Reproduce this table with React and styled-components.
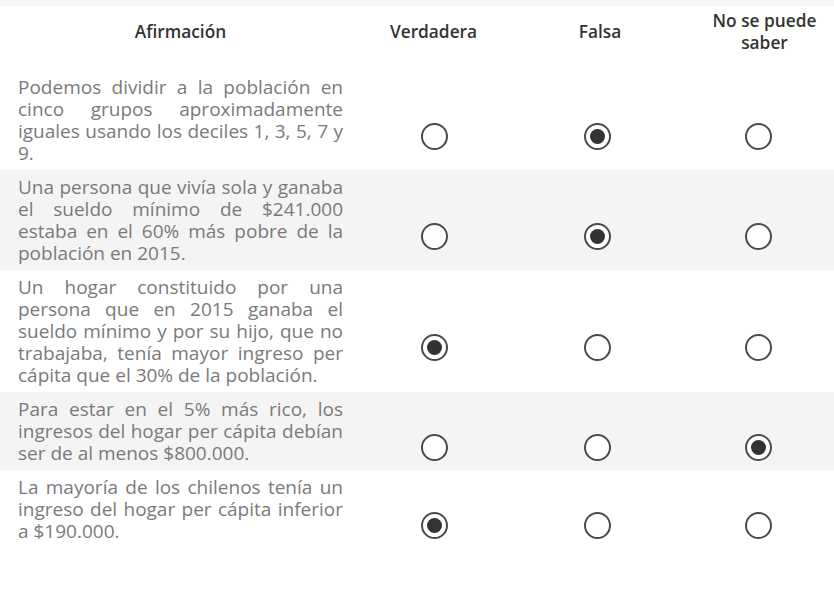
import React, { useState } from "react";
import styled, { createGlobalStyle } from "styled-components";

const GlobalStyle = createGlobalStyle`
  body {
    margin: 0;
    background: #ffffff;
    font-family: "Open Sans", "Liberation Sans", sans-serif;
  }
`;

const TopStrip = styled.div`
  height: 6px;
  background-color: #f5f5f5;
`;

const Header = styled.div`
  display: grid;
  grid-template-columns: 362px 143px 190px 139px;
  align-items: center;
  height: 52px;
  padding-bottom: 12px;
`;

const HeadCell = styled.div`
  text-align: center;
  font-size: 17.3px;
  line-height: 22px;
  font-weight: 600;
  color: #333333;
  padding-left: ${(p) => (p.$first ? "18px" : "0")};
  padding-right: ${(p) => (p.$first ? "19px" : "0")};
`;

const Row = styled.div`
  display: grid;
  grid-template-columns: 420px 163px 161px 1fr;
  background-color: ${(p) => (p.$striped ? "#f4f4f4" : "#ffffff")};
`;

const Statement = styled.div`
  padding: 6px 77px 6px 18px;
  font-size: 19px;
  line-height: 22px;
  color: #7a7a7a;
  text-align: justify;
`;

const RadioCell = styled.div`
  display: flex;
  align-items: center;
  padding-top: 32px;
  padding-left: 1px;
  cursor: pointer;
`;

const Radio = styled.span`
  box-sizing: border-box;
  width: 27px;
  height: 27px;
  border-radius: 50%;
  border: 2px solid #4a4a4a;
  background: #ffffff;
  display: flex;
  align-items: center;
  justify-content: center;

  &::after {
    content: "";
    width: 15px;
    height: 15px;
    border-radius: 50%;
    background: #333333;
    display: ${(p) => (p.$checked ? "block" : "none")};
  }
`;

const statements = [
  {
    text: "Podemos dividir a la población en cinco grupos aproximadamente iguales usando los deciles 1, 3, 5, 7 y 9.",
    answer: 1,
  },
  {
    text: "Una persona que vivía sola y ganaba el sueldo mínimo de $241.000 estaba en el 60% más pobre de la población en 2015.",
    answer: 1,
  },
  {
    text: "Un hogar constituido por una persona que en 2015 ganaba el sueldo mínimo y por su hijo, que no trabajaba, tenía mayor ingreso per cápita que el 30% de la población.",
    answer: 0,
  },
  {
    text: "Para estar en el 5% más rico, los ingresos del hogar per cápita debían ser de al menos $800.000.",
    answer: 2,
  },
  {
    text: "La mayoría de los chilenos tenía un ingreso del hogar per cápita inferior a $190.000.",
    answer: 0,
  },
];

const options = ["Verdadera", "Falsa", "No se puede saber"];

const App = () => {
  const [answers, setAnswers] = useState(statements.map((s) => s.answer));

  const choose = (row, col) => {
    const next = [...answers];
    next[row] = col;
    setAnswers(next);
  };

  return (
    <>
      <GlobalStyle />
      <TopStrip />
      <Header>
        <HeadCell $first>Afirmación</HeadCell>
        {options.map((o) => (
          <HeadCell key={o}>{o}</HeadCell>
        ))}
      </Header>
      {statements.map((s, i) => (
        <Row key={i} $striped={i % 2 === 1}>
          <Statement>{s.text}</Statement>
          {options.map((o, j) => (
            <RadioCell key={o} onClick={() => choose(i, j)}>
              <Radio $checked={answers[i] === j} />
            </RadioCell>
          ))}
        </Row>
      ))}
    </>
  );
};

export default App;
